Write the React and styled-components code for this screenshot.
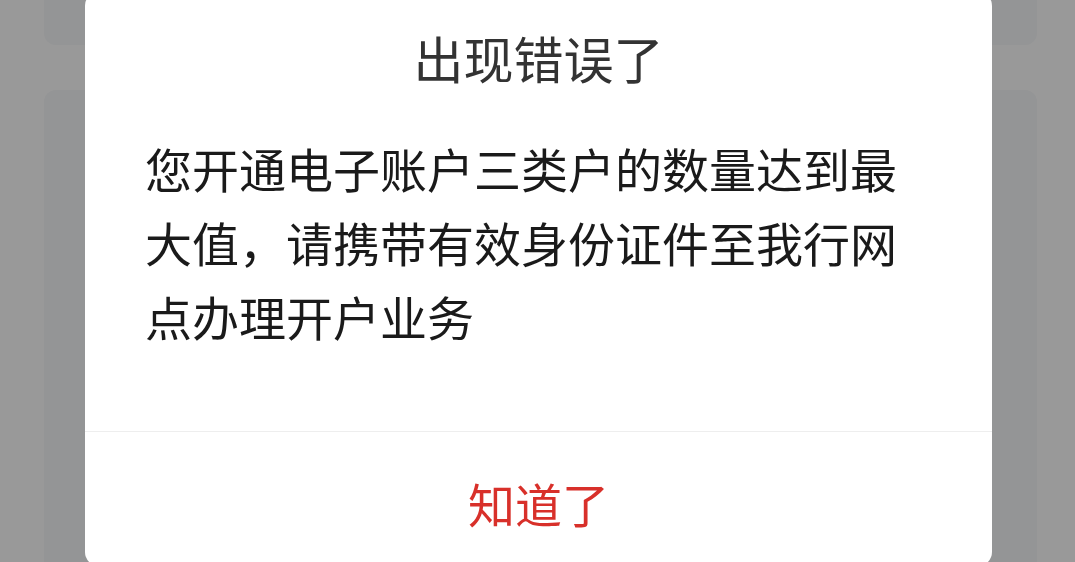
import React from "react"
import styled, { createGlobalStyle } from "styled-components"

const GlobalStyle = createGlobalStyle`
  html, body {
    margin: 0;
    height: 100%;
    overflow: hidden;
  }
  body {
    font-family: "Noto Sans CJK SC", "Noto Sans", sans-serif;
    background: #ffffff;
  }
  #root {
    height: 100%;
  }
`

const Page = styled.div`
  height: 100%;
  display: flex;
  flex-direction: column;
  gap: 45px;
  padding: 0 38px 0 44px;
  box-sizing: border-box;
`

const Card = styled.div`
  background: #f7f8fa;
  border-radius: 12px;
  height: ${({ h }) => h};
  margin-top: ${({ mt }) => mt || 0};
  flex-shrink: 0;
`

const Mask = styled.div`
  position: fixed;
  inset: 0;
  background: rgba(0, 0, 0, 0.4);
`

const Dialog = styled.div`
  position: absolute;
  left: 85px;
  top: -8px;
  width: 907px;
  background: #ffffff;
  border-radius: 14px;
  overflow: hidden;
  display: flex;
  flex-direction: column;
`

const Title = styled.h2`
  margin: 0;
  padding-top: 30px;
  font-size: 50px;
  line-height: 70px;
  font-weight: 400;
  color: #333333;
  text-align: center;
`

const Message = styled.p`
  margin: 39px 0 0;
  padding: 0 60px 78px;
  font-size: 47px;
  line-height: 74px;
  color: #1a1a1a;
`

const Footer = styled.div`
  border-top: 1px solid #eeeeee;
  display: flex;
`

const Action = styled.button`
  flex: 1;
  height: 134px;
  border: none;
  background: none;
  font-family: inherit;
  font-size: 47px;
  color: ${({ tone }) => tone || "#333333"};
  padding: 6px 0 0;
  cursor: pointer;
`

const App = () => {
  return (
    <>
      <GlobalStyle />
      <Page>
        <Card h="55px" mt="-10px" />
        <Card h="600px" />
      </Page>
      <Mask>
        <Dialog>
          <Title>出现错误了</Title>
          <Message>
            您开通电子账户三类户的数量达到最大值，请携带有效身份证件至我行网点办理开户业务
          </Message>
          <Footer>
            <Action tone="#d8302a">知道了</Action>
          </Footer>
        </Dialog>
      </Mask>
    </>
  )
}

export default App
